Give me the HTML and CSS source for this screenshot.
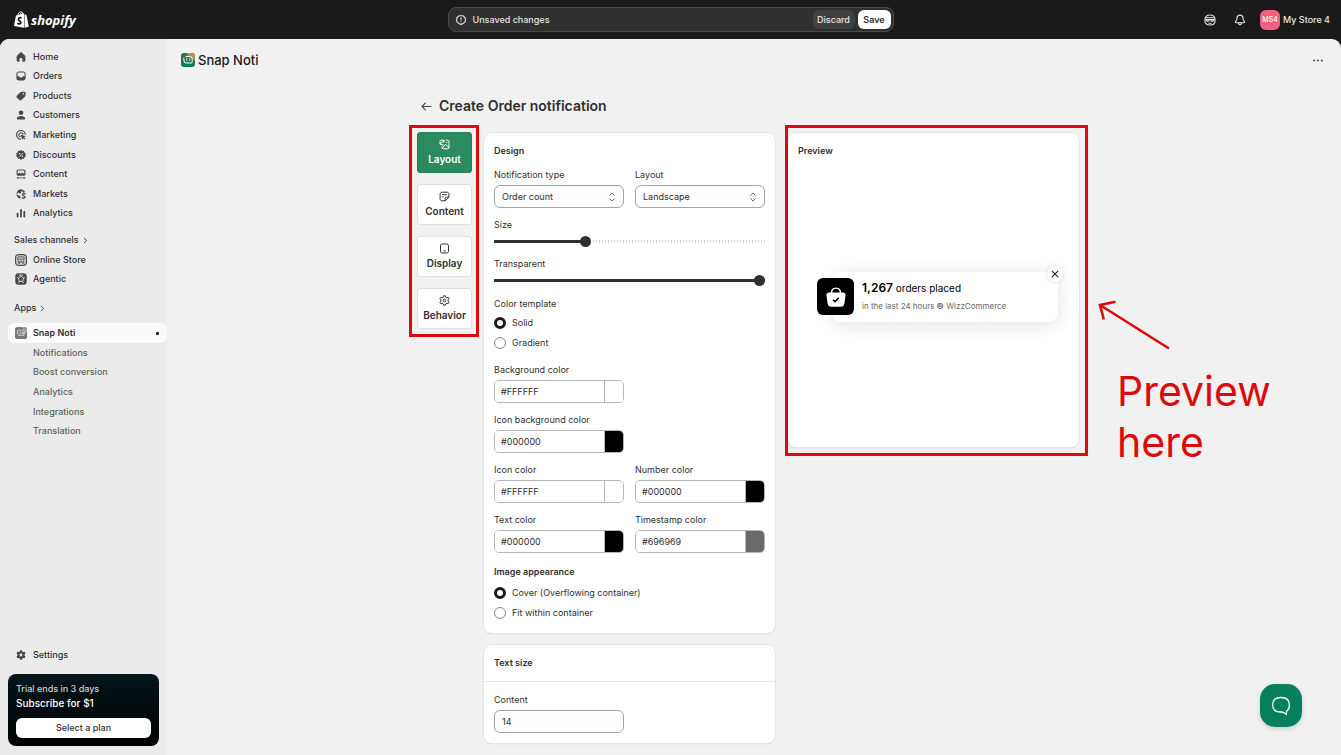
FILE: index.html
```html
<!DOCTYPE html>
<html lang="en">
<head>
    <title>Snap Noti</title>
    <meta charset="UTF-8">
    <meta name="viewport" content="width=device-width, initial-scale=1.0">
    <link rel="stylesheet" href="styles.css">
</head>
<body>
    <header class="topbar">
        <a class="brand" href="#">
            <svg width="15" height="17" viewBox="0 0 15 17">
                <path d="M2 4.5 10 2.6V16.8L0 15Z" fill="#fff"/>
                <path d="M10.5 2.8 12.6 4.6 14.8 15.7 10.5 16.8Z" fill="#fff"/>
                <path d="M3.8 4.6C4.2 2.2 5.5.7 6.9.8 8.3.9 8.9 2.4 8.9 3.6M6 4C6.5 1.7 7.8.8 9.2 2.6" fill="none" stroke="#fff" stroke-width="0.9"/>
                <path d="M7.7 7C6 6.2 4.3 7 4.4 8.4 4.5 10 7 9.9 6.9 11.6 6.8 13 5 13.3 3.4 12.3" fill="none" stroke="#1a1a1a" stroke-width="1.7"/>
            </svg>
            <span>shopify</span>
        </a>
        <div class="save-bar">
            <svg width="10" height="10" viewBox="0 0 10 10" fill="none" stroke="#e3e3e3" stroke-width="1.1">
                <path d="M3.2.7H6.8L9.3 3V6.6L7 8.7H6.2L5 9.6 3.8 8.7H3L.7 6.6V3Z" stroke-linejoin="round"/>
                <path d="M5 2.5V5.3M5 6.2V7.2"/>
            </svg>
            <span class="save-text">Unsaved changes</span>
            <button class="discard">Discard</button>
            <button class="save">Save</button>
        </div>
        <div class="account">
            <button class="icon-btn" aria-label="Assistant">
                <svg width="12" height="12" viewBox="0 0 12 12" fill="none" stroke="#e3e3e3" stroke-width="1.1">
                    <path d="M1 5.2C1 2.7 3 1 6 1S11 2.7 11 5.2V7.3C11 9.6 9 11 6 11S1 9.6 1 7.3Z"/>
                    <path d="M1.3 3.8H10.7M1.2 5.6H4.8M7.2 5.6H10.8M2.2 6.2C3 7.8 5 7.8 5.4 5.6H6.6C7 7.8 9 7.8 9.8 6.2M4.5 9.2H7.5"/>
                </svg>
            </button>
            <button class="icon-btn" aria-label="Notifications">
                <svg width="12" height="12" viewBox="0 0 12 12" fill="none" stroke="#e3e3e3" stroke-width="1.1" stroke-linejoin="round">
                    <path d="M6 1.1C4.1 1.1 3 2.5 3 4.2 3 6 2.5 6.7 1.5 7.7 1.2 8.1 1.4 8.7 2 8.7H10C10.6 8.7 10.8 8.1 10.5 7.7 9.5 6.7 9 6 9 4.2 9 2.5 7.9 1.1 6 1.1Z"/>
                    <path d="M4.6 8.9C4.6 11.2 7.4 11.2 7.4 8.9"/>
                </svg>
            </button>
            <button class="store"><span class="avatar">MS4</span>My Store 4</button>
        </div>
    </header>

    <div class="frame">
        <aside class="sidebar">
            <nav>
                <ul class="nav-list nav-main">
                    <li><a href="#"><svg viewBox="0 0 10 10"><path d="M5 .3C4.6.3 4.3.5 4 .8L1.2 3.4C.8 3.8.6 4.2.6 4.7V8.2C.6 9 1.2 9.7 2 9.7H3.6V7.3C3.6 6.5 4.2 6 5 6S6.4 6.5 6.4 7.3V9.7H8C8.8 9.7 9.4 9 9.4 8.2V4.7C9.4 4.2 9.2 3.8 8.8 3.4L6 .8C5.7.5 5.4.3 5 .3Z"/></svg>Home</a></li>
                    <li><a href="#"><svg viewBox="0 0 10 10"><path fill-rule="evenodd" d="M2.6.5H7.4C8.6.5 9.6 1.5 9.6 2.7V7.3C9.6 8.5 8.6 9.5 7.4 9.5H2.6C1.4 9.5.4 8.5.4 7.3V2.7C.4 1.5 1.4.5 2.6.5ZM2.6 1.6C2 1.6 1.5 2.1 1.5 2.7V5.3H3L4 6.6H6L7 5.3H8.5V2.7C8.5 2.1 8 1.6 7.4 1.6Z"/></svg>Orders</a></li>
                    <li><a href="#"><svg viewBox="0 0 10 10"><path fill-rule="evenodd" d="M6 .7H8.2C9 .7 9.5 1.2 9.5 2V4.1C9.5 4.8 9.2 5.3 8.8 5.7L5.4 9C4.8 9.6 3.9 9.6 3.3 9L.9 6.7C.3 6.1.3 5.2.9 4.6L4.3 1.3C4.8.9 5.3.7 6 .7ZM7.4 2.1A.7.7 0 1 0 7.4 3.5.7.7 0 0 0 7.4 2.1Z"/></svg>Products</a></li>
                    <li><a href="#"><svg viewBox="0 0 10 10"><circle cx="5" cy="2.7" r="2.3"/><path d="M5 6C2.7 6 .8 7.2.8 8.6.8 9.2 1.2 9.5 1.8 9.5H8.2C8.8 9.5 9.2 9.2 9.2 8.6 9.2 7.2 7.3 6 5 6Z"/></svg>Customers</a></li>
                    <li><a href="#"><svg viewBox="0 0 10 10"><path d="M9.4 4.8A4.4 4.4 0 1 0 4.8 9.3M7.2 4.5A2.2 2.2 0 1 0 4.5 7.1" fill="none" stroke="#4a4a4a" stroke-width="1.2"/><path d="M4.6 4.5 9.8 6.3 8 7.3 9.4 8.8 8.6 9.6 7.2 8.2 6.2 9.8Z"/></svg>Marketing</a></li>
                    <li><a href="#"><svg viewBox="0 0 10 10"><path fill-rule="evenodd" d="M5 0 6.3 1 7.9.8 8.4 2.4 9.8 3.2 9.3 4.8 9.9 6.3 8.5 7.2 8 8.8H6.4L5 9.9 3.7 8.8H2L1.5 7.2.1 6.3.7 4.8.2 3.2 1.6 2.4 2.1.8 3.7 1ZM3.5 2.9A.7.7 0 1 0 3.6 4.3.7.7 0 0 0 3.5 2.9ZM6.5 3 3 6.5 3.5 7 7 3.5ZM6.4 5.6A.7.7 0 1 0 6.5 7 .7.7 0 0 0 6.4 5.6Z"/></svg>Discounts</a></li>
                    <li><a href="#"><svg viewBox="0 0 10 10"><path fill-rule="evenodd" d="M2.4.4H7.6C8.7.4 9.5 1.2 9.5 2.2V5C9.5 6 8.7 6.8 7.6 6.8H2.4C1.3 6.8.5 6 .5 5V2.2C.5 1.2 1.3.4 2.4.4ZM1.7 5.1 3.5 3.4 5 4.8 6.5 3.4 8.3 5.1V2.3C8.3 1.9 8 1.5 7.6 1.5H2.4C2 1.5 1.7 1.9 1.7 2.3Z"/><path d="M.7 8.3H3.5V9.4H.7ZM4.4 8.3H5.7V9.4H4.4ZM6.6 8.3H9.3V9.4H6.6Z"/></svg>Content</a></li>
                    <li><a href="#"><svg viewBox="0 0 10 10"><path d="M4.6.3A4.7 4.7 0 0 0 4.6 9.6L4.5 7.7 3.1 6.3 1.2 5.9 1.3 4.2 3 3.4 3.6 4.8 5.3 4 5 2.8 6.9 1.9 6.6.7Z"/><path d="M7.2.9 9.2 3.1 7.6 3.8 6.3 3.1Z"/><path d="M9.5 5.2C8.6 4.2 6.3 4.5 6.5 5.9 6.7 7.1 9 6.5 9 8 9 9.2 7 9.6 5.9 8.5" fill="none" stroke="#4a4a4a" stroke-width="1.3"/></svg>Markets</a></li>
                    <li><a href="#"><svg viewBox="0 0 10 10"><rect x=".7" y="4.8" width="1.8" height="4.7" rx=".8"/><rect x="4.1" y=".9" width="1.8" height="8.6" rx=".8"/><rect x="7.4" y="2.9" width="1.8" height="6.6" rx=".8"/></svg>Analytics</a></li>
                </ul>
                <a class="nav-heading" href="#">Sales channels <svg width="5" height="7" viewBox="0 0 5 7"><path d="M1 .9 3.6 3.5 1 6.1"/></svg></a>
                <ul class="nav-list nav-channels">
                    <li><a href="#"><svg viewBox="0 0 12 12"><rect x=".6" y=".6" width="10.8" height="10.8" rx="2.8" fill="#d4d4d4" stroke="#4a4a4a" stroke-width="1.2"/><path d="M3.2 2.9H8.8L9.4 5.2H2.6ZM3.3 6.3V9.2H4.9V7.4H7.1V9.2H8.7V6.3" fill="none" stroke="#4a4a4a" stroke-width=".9"/></svg>Online Store</a></li>
                    <li><a href="#"><svg viewBox="0 0 12 12"><rect x=".3" y=".3" width="11.4" height="11.4" rx="3" fill="#4a4a4a"/><path d="M6 3.2 8.6 5 7.7 8.4H4.3L3.4 5Z" fill="none" stroke="#e0e0e0" stroke-width=".9"/><path d="M2.2 4.4 3.4 5M9.8 4.4 8.6 5M3.4 9.9 4.3 8.4M8.6 9.9 7.7 8.4M3.9 2.1H8.1" stroke="#e0e0e0" stroke-width=".9"/></svg>Agentic</a></li>
                </ul>
                <a class="nav-heading" href="#">Apps <svg width="5" height="7" viewBox="0 0 5 7"><path d="M1 .9 3.6 3.5 1 6.1"/></svg></a>
                <a class="nav-app" href="#">
                    <svg viewBox="0 0 12 12"><rect width="12" height="12" rx="2.6" fill="#777"/><path d="M6 0H9.4A2.6 2.6 0 0 1 12 2.6V6Z" fill="#9b9b9b"/><path d="M5.6 3.2C3.5 2 1.8 4 2.5 5.7 2 7.8 4.7 9 6.6 8.2M5.2 4.3V6.8M6.6 3.4C9 2.3 10.7 4.4 9.5 6.2 10.2 8 8.3 8.8 6.8 8.1M6.7 5H8.3V6.7H6.7" fill="none" stroke="#ececec" stroke-width=".9"/></svg>
                    Snap Noti
                    <span class="pin"></span>
                </a>
                <ul class="nav-list nav-sub">
                    <li><a href="#">Notifications</a></li>
                    <li><a href="#">Boost conversion</a></li>
                    <li><a href="#">Analytics</a></li>
                    <li><a href="#">Integrations</a></li>
                    <li><a href="#">Translation</a></li>
                </ul>
            </nav>
            <div class="sidebar-bottom">
                <a class="nav-settings" href="#"><svg viewBox="0 0 10 10"><path fill-rule="evenodd" d="M4.1.3H5.9L6.3 1.6 7.3 2.1 8.6 1.8 9.5 3.3 8.6 4.4V5.6L9.5 6.7 8.6 8.2 7.3 7.9 6.3 8.4 5.9 9.7H4.1L3.7 8.4 2.7 7.9 1.4 8.2.5 6.7 1.4 5.6V4.4L.5 3.3 1.4 1.8 2.7 2.1 3.7 1.6ZM5 3.6A1.4 1.4 0 1 0 5 6.4 1.4 1.4 0 0 0 5 3.6Z"/></svg>Settings</a>
                <div class="trial">
                    <p>Trial ends in 3 days</p>
                    <p class="subscribe">Subscribe for $1</p>
                    <button>Select a plan</button>
                </div>
            </div>
        </aside>

        <main class="main">
            <div class="app-header">
                <svg width="14" height="14" viewBox="0 0 14 14"><rect width="14" height="14" rx="3" fill="#147a5c"/><path d="M5 0H11A3 3 0 0 1 14 3V8Z" fill="#b98b58"/><path d="M6.6 3.6C4.2 2.6 2 4.9 3 6.9 2.4 9.4 5 10.6 7.3 9.8 9.6 10.8 12 9.6 11.2 7.2 12 4.8 9.6 2.8 6.6 3.6Z" fill="none" stroke="#e8f4ef" stroke-width="1.1"/><path d="M5.9 5.2C5.2 6.2 5.4 7.4 6.4 8M8 5.4C9.4 5.4 9.6 7.2 8.2 7.8" fill="none" stroke="#e8f4ef" stroke-width=".9"/><circle cx="3.9" cy="4.2" r="1.2" fill="#d43b35"/></svg>
                <span class="app-name">Snap Noti</span>
                <button class="more" aria-label="More actions"><svg width="10" height="3" viewBox="0 0 10 3" fill="#4a4a4a"><circle cx="1.2" cy="1.5" r="1"/><circle cx="5" cy="1.5" r="1"/><circle cx="8.8" cy="1.5" r="1"/></svg></button>
            </div>

            <div class="page">
                <div class="page-title">
                    <a href="#" aria-label="Back"><svg width="11" height="9" viewBox="0 0 11 9" fill="none" stroke="#4a4a4a" stroke-width="1.2" stroke-linecap="round" stroke-linejoin="round"><path d="M10 4.5H1.2M4.3 1.2 1 4.5 4.3 7.8"/></svg></a>
                    <h1>Create Order notification</h1>
                </div>

                <div class="columns">
                    <div class="tabs">
                        <button class="tab active">
                            <svg viewBox="0 0 11 11"><path d="M5 1.2H2.2C1.5 1.2 1 1.7 1 2.4V4.6C1 5.2 1.5 5.7 2.2 5.7H4.6M1.2 4.7 5 2M5 1.2V3.6M6.8 1.2H8.8C9.5 1.2 10 1.7 10 2.4V8.6C10 9.3 9.5 9.8 8.8 9.8H4.2C3.5 9.8 3 9.3 3 8.6V7.4M3.3 9 6.7 5.3 9.8 8.7M7.2 3.5H8.4"/></svg>
                            Layout
                        </button>
                        <button class="tab">
                            <svg viewBox="0 0 11 11"><path d="M6.2 9.8H3C1.9 9.8 1.1 9 1.1 7.9V3.1C1.1 2 1.9 1.2 3 1.2H8C9.1 1.2 9.9 2 9.9 3.1V6.2L6.2 9.8V7.6C6.2 6.8 6.7 6.2 7.6 6.2H9.8M3.2 3.7H7.8M3.2 5.8H4.6"/></svg>
                            Content
                        </button>
                        <button class="tab">
                            <svg viewBox="0 0 11 11"><rect x="1.5" y="1" width="8" height="9" rx="1.8"/><path d="M4.3 7.9H6.7"/></svg>
                            Display
                        </button>
                        <button class="tab">
                            <svg viewBox="0 0 11 11"><path d="M4.6.8H6.4L6.8 2.2 7.8 2.7 9.2 2.3 10.1 3.8 9.1 4.8V6.2L10.1 7.2 9.2 8.7 7.8 8.3 6.8 8.8 6.4 10.2H4.6L4.2 8.8 3.2 8.3 1.8 8.7.9 7.2 1.9 6.2V4.8L.9 3.8 1.8 2.3 3.2 2.7 4.2 2.2Z"/><circle cx="5.5" cy="5.5" r="1.4"/></svg>
                            Behavior
                        </button>
                        <div class="highlight highlight-tabs"></div>
                    </div>

                    <div class="settings">
                        <form class="forms">
                            <section class="card design">
                                <h2>Design</h2>
                                <div class="row">
                                    <div class="field">
                                        <label for="type">Notification type</label>
                                        <div class="select">
                                            <select id="type"><option>Order count</option></select>
                                            <svg width="8" height="10" viewBox="0 0 8 10"><path d="M1.5 3.5 4 1 6.5 3.5M1.5 6.5 4 9 6.5 6.5"/></svg>
                                        </div>
                                    </div>
                                    <div class="field">
                                        <label for="layout">Layout</label>
                                        <div class="select">
                                            <select id="layout"><option>Landscape</option></select>
                                            <svg width="8" height="10" viewBox="0 0 8 10"><path d="M1.5 3.5 4 1 6.5 3.5M1.5 6.5 4 9 6.5 6.5"/></svg>
                                        </div>
                                    </div>
                                </div>
                                <div class="range-field">
                                    <label for="size">Size</label>
                                    <input type="range" id="size" min="0" max="100" value="33" style="--value: 33%">
                                </div>
                                <div class="range-field">
                                    <label for="transparent">Transparent</label>
                                    <input type="range" id="transparent" min="0" max="100" value="100" style="--value: 100%">
                                </div>
                                <fieldset class="choices template">
                                    <legend>Color template</legend>
                                    <label><input type="radio" name="template" checked>Solid</label>
                                    <label><input type="radio" name="template">Gradient</label>
                                </fieldset>
                                <div class="row">
                                    <div class="field">
                                        <label for="bg">Background color</label>
                                        <div class="color"><input type="text" id="bg" value="#FFFFFF"><input type="color" value="#ffffff" aria-label="Pick background color"></div>
                                    </div>
                                </div>
                                <div class="row">
                                    <div class="field">
                                        <label for="icon-bg">Icon background color</label>
                                        <div class="color"><input type="text" id="icon-bg" value="#000000"><input type="color" value="#000000" aria-label="Pick icon background color"></div>
                                    </div>
                                </div>
                                <div class="row">
                                    <div class="field">
                                        <label for="icon-color">Icon color</label>
                                        <div class="color"><input type="text" id="icon-color" value="#FFFFFF"><input type="color" value="#ffffff" aria-label="Pick icon color"></div>
                                    </div>
                                    <div class="field">
                                        <label for="number-color">Number color</label>
                                        <div class="color"><input type="text" id="number-color" value="#000000"><input type="color" value="#000000" aria-label="Pick number color"></div>
                                    </div>
                                </div>
                                <div class="row">
                                    <div class="field">
                                        <label for="text-color">Text color</label>
                                        <div class="color"><input type="text" id="text-color" value="#000000"><input type="color" value="#000000" aria-label="Pick text color"></div>
                                    </div>
                                    <div class="field">
                                        <label for="time-color">Timestamp color</label>
                                        <div class="color"><input type="text" id="time-color" value="#696969"><input type="color" value="#696969" aria-label="Pick timestamp color"></div>
                                    </div>
                                </div>
                                <fieldset class="choices appearance">
                                    <legend>Image appearance</legend>
                                    <label><input type="radio" name="image" checked>Cover (Overflowing container)</label>
                                    <label><input type="radio" name="image">Fit within container</label>
                                </fieldset>
                            </section>

                            <section class="card text-size">
                                <h2>Text size</h2>
                                <div class="card-body row">
                                    <div class="field">
                                        <label for="content-size">Content</label>
                                        <input class="number" type="text" inputmode="numeric" id="content-size" value="14">
                                    </div>
                                </div>
                            </section>
                        </form>

                        <div class="preview-column">
                            <section class="card preview">
                                <h2>Preview</h2>
                                <div class="preview-body">
                                    <div class="notification">
                                        <div class="bag">
                                            <svg width="20" height="20" viewBox="0 0 20 20">
                                                <path d="M5.4 6.5C5.4 3 7.3 1.1 10 1.1S14.6 3 14.6 6.5" fill="none" stroke="#fff" stroke-width="1.4"/>
                                                <path d="M3.3 5.6H16.7C18.7 5.6 19.8 7 19.5 8.8L18.4 16.6C18 18.8 16.8 19.8 14.8 19.8H5.2C3.2 19.8 2 18.8 1.6 16.6L.5 8.8C.2 7 1.3 5.6 3.3 5.6Z" fill="#fff"/>
                                                <path d="M7 12.7 9 14.6 12.8 10.8" fill="none" stroke="#000" stroke-width="1.5"/>
                                            </svg>
                                        </div>
                                        <div class="message">
                                            <p><strong>1,267</strong> orders placed</p>
                                            <p class="time">in the last 24 hours <b>©</b> WizzCommerce</p>
                                        </div>
                                        <button class="close" aria-label="Close"><svg width="8" height="8" viewBox="0 0 8 8"><path d="M.8.8 7.2 7.2M7.2.8.8 7.2" stroke="#222" stroke-width="1.1"/></svg></button>
                                    </div>
                                </div>
                            </section>
                            <div class="highlight highlight-preview"></div>
                            <div class="note">
                                <svg width="72" height="50" viewBox="0 0 72 50" fill="none" stroke="#dc0a0a" stroke-width="2.6"><path d="M71 48.5 2 5M17.5 1.8 2 5 5.8 19.5"/></svg>
                                <p>Preview<br>here</p>
                            </div>
                        </div>
                    </div>
                </div>
            </div>
        </main>
    </div>

    <button class="chat" aria-label="Open chat">
        <svg width="20" height="20" viewBox="0 0 20 20" fill="none" stroke="#fff" stroke-width="1.3" stroke-linejoin="round"><path d="M10 1.5C4.5 1.5 1.6 3.7 1.6 9S4.5 16 10 16C11.5 16 12.5 16.3 13.4 17L15.3 18.5 15.7 15C17.6 13.8 18.4 11.9 18.4 9 18.4 3.7 15.5 1.5 10 1.5Z"/></svg>
    </button>
</body>
</html>
```
FILE: styles.css
```css
* {
    box-sizing: border-box;
}
body {
    margin: 0;
    height: 100vh;
    display: flex;
    flex-direction: column;
    overflow: hidden;
    background: #1a1a1a;
    color: #303030;
    font-family: Inter, "Liberation Sans", sans-serif;
    font-size: 9px;
    line-height: 14px;
}
button, input, select {
    font: inherit;
    color: inherit;
}
button {
    border: none;
    padding: 0;
    cursor: pointer;
}
a {
    color: inherit;
    text-decoration: none;
}
ul {
    list-style: none;
    margin: 0;
    padding: 0;
}
h1, h2, p {
    margin: 0;
}
svg {
    display: block;
    flex: none;
}

/* top bar */
.topbar {
    display: grid;
    grid-template-columns: 1fr minmax(0, 446px) 1fr;
    align-items: center;
    height: 39px;
    padding: 0 11px;
    color: #e3e3e3;
    font-weight: 500;
}
.brand {
    display: flex;
    align-items: center;
    gap: 2px;
    padding-left: 3px;
    color: #fff;
    font: italic 700 13px "Open Sans", sans-serif;
}
.save-bar {
    display: flex;
    align-items: center;
    height: 25px;
    padding: 0 2px 0 7px;
    border: 1px solid #4a4a4a;
    border-radius: 8px;
    background: #303030;
}
.save-text {
    flex: 1;
    margin-left: 7px;
}
.discard, .save {
    height: 19px;
    border-radius: 6px;
}
.discard {
    width: 42px;
    margin-right: 3px;
    background: #404040;
}
.save {
    width: 33px;
    background: #fff;
    color: #303030;
    font-weight: 600;
}
.account {
    display: flex;
    justify-content: flex-end;
    align-items: center;
}
.icon-btn {
    margin-right: 18px;
    background: none;
}
.icon-btn + .icon-btn {
    margin-right: 14px;
}
.store {
    display: flex;
    align-items: center;
    gap: 3px;
    background: none;
}
.avatar {
    width: 20px;
    border-radius: 6px;
    background: #f2607f;
    color: #fff;
    font-size: 7px;
    line-height: 20px;
    text-align: center;
}

/* sidebar */
.frame {
    flex: 1;
    min-height: 0;
    display: flex;
    border-radius: 9px 9px 0 0;
    overflow: hidden;
    background: #f1f1f1;
}
.sidebar {
    width: 167px;
    flex: none;
    display: flex;
    flex-direction: column;
    justify-content: space-between;
    padding: 8px 0 9px;
    background: #ebebeb;
    font-weight: 500;
}
.nav-list {
    display: grid;
    grid-auto-rows: 1fr;
}
.nav-list a, .nav-app, .nav-settings {
    display: flex;
    align-items: center;
    height: 100%;
    padding-left: 16px;
}
.sidebar svg {
    fill: #4a4a4a;
}
.nav-list svg, .nav-settings svg {
    width: 10px;
    height: 10px;
    margin-right: 7px;
}
.nav-main {
    min-height: 176px;
}
.nav-heading {
    display: flex;
    align-items: center;
    gap: 4px;
    margin-top: 7px;
    padding-left: 14px;
    line-height: 20px;
}
.nav-heading svg {
    fill: none;
    stroke: #4a4a4a;
}
.nav-channels {
    min-height: 39px;
    margin-bottom: 9px;
}
.nav-list.nav-channels a {
    padding-left: 15px;
}
.nav-list.nav-channels svg, .nav-app svg {
    width: 12px;
    height: 12px;
    margin-right: 6px;
}
.nav-app {
    height: 20px;
    margin: 5px 0 0 8px;
    padding: 0 8px 0 7px;
    border-radius: 6px;
    background: #fafafa;
    font-weight: 600;
}
.pin {
    width: 3px;
    height: 3px;
    margin-left: auto;
    border-radius: 1px;
    background: #1a1a1a;
}
.nav-sub {
    min-height: 98px;
    color: #616161;
}
.nav-list.nav-sub a {
    padding-left: 33px;
}
.nav-settings {
    height: 20px;
    margin-bottom: 9px;
}
.trial {
    margin: 0 8px;
    padding: 8px;
    border-radius: 8px;
    background: linear-gradient(#04161a, #000);
    color: #d0d0d0;
}
.trial .subscribe {
    color: #fff;
    font-size: 10px;
    font-weight: 500;
}
.trial button {
    width: 100%;
    height: 20px;
    margin-top: 8px;
    border-radius: 6px;
    background: #fff;
    color: #303030;
}

/* main area */
.main {
    flex: 1;
    min-width: 0;
}
.app-header {
    display: flex;
    align-items: center;
    gap: 3px;
    height: 40px;
    padding: 3px 18px 0 14px;
    border-bottom: 1px solid #ececec;
}
.app-name {
    flex: 1;
    font-size: 13px;
    font-weight: 500;
    color: #1a1a1a;
}
.more {
    background: none;
}
.page {
    max-width: 674px;
    margin: 0 auto;
    padding: 17px 12px 12px 0;
}
.page-title {
    display: flex;
    align-items: center;
    gap: 7px;
    padding-left: 4px;
}
.page-title h1 {
    font-size: 14px;
    line-height: 20px;
    font-weight: 600;
}
.columns {
    display: flex;
    gap: 12px;
    margin-top: 16px;
}
.tabs {
    position: relative;
    display: flex;
    flex-direction: column;
    gap: 11px;
    align-self: flex-start;
    width: 55px;
}
.tab {
    display: flex;
    flex-direction: column;
    align-items: center;
    gap: 2px;
    height: 41px;
    padding-top: 6px;
    border: 1px solid #e0e0e0;
    border-radius: 3px;
    background: #fff;
    font-size: 10px;
    font-weight: 600;
}
.tab.active {
    border-color: #2c7d58;
    background: #2c8a60;
    color: #fff;
}
.tab svg {
    width: 11px;
    height: 11px;
    fill: none;
    stroke: currentColor;
}
.settings {
    flex: 1;
    display: grid;
    grid-template-columns: 1fr 1fr;
    gap: 13px;
    align-items: start;
    margin-top: 1px;
}
.forms {
    display: flex;
    flex-direction: column;
    gap: 12px;
}
.card {
    border-radius: 8px;
    background: #fff;
    box-shadow: 0 0 0 1px #e5e5e5, 0 1px 1px #c4c4c4;
}
.card h2 {
    font-size: 9px;
    line-height: 15px;
    font-weight: 600;
}
.design {
    display: flex;
    flex-direction: column;
    gap: 10px;
    padding: 10px;
}
.row {
    display: grid;
    grid-template-columns: 1fr 1fr;
    gap: 11px;
}
.field {
    display: flex;
    flex-direction: column;
    gap: 3px;
    min-width: 0;
}
.select {
    position: relative;
}
.select select, .number {
    display: block;
    width: 100%;
    height: 23px;
    padding: 0 7px;
    border: 1px solid #a3a3a3;
    border-radius: 6px;
    background: #fdfdfd;
    appearance: none;
}
.select svg {
    position: absolute;
    top: 7px;
    right: 8px;
    fill: none;
    stroke: #6a6a6a;
    pointer-events: none;
}
.range-field {
    display: flex;
    flex-direction: column;
}
.range-field + .range-field {
    margin-top: -3px;
}
.range-field input {
    width: 100%;
    height: 18px;
    margin: 0;
    appearance: none;
    background:
        linear-gradient(#303030, #303030) left / var(--value) 3px no-repeat,
        repeating-linear-gradient(90deg, #d8d8d8 0 1px, transparent 1px 3px) center / 100% 3px no-repeat;
}
.range-field input::-webkit-slider-thumb {
    appearance: none;
    width: 11px;
    height: 11px;
    border-radius: 50%;
    background: #303030;
}
.choices {
    display: flex;
    flex-direction: column;
    margin: 0;
    padding: 0;
    border: none;
}
.choices legend {
    padding: 0 0 2px;
}
.choices label {
    display: flex;
    align-items: center;
    gap: 6px;
    height: 20px;
}
.choices input {
    width: 12px;
    height: 12px;
    margin: 0;
    border: 1px solid #8a8a8a;
    border-radius: 50%;
    background: #fff;
    appearance: none;
}
.choices input:checked {
    border: 3px solid #1a1a1a;
}
.template {
    margin-top: -2px;
}
.appearance {
    margin-top: 2px;
}
.appearance legend {
    padding-bottom: 4px;
    font-weight: 600;
}
.color {
    display: flex;
    height: 23px;
    border: 1px solid #b5b5b5;
    border-radius: 5px;
    overflow: hidden;
}
.color input {
    border: none;
    padding: 0;
}
.color input[type="text"] {
    flex: 1;
    min-width: 0;
    padding-left: 6px;
}
.color input[type="color"] {
    width: 19px;
    height: 100%;
    border-left: 1px solid #b5b5b5;
    background: none;
    appearance: none;
}
.color input::-webkit-color-swatch-wrapper {
    padding: 0;
}
.color input::-webkit-color-swatch {
    border: none;
    border-radius: 0;
}
.text-size h2 {
    padding: 10px 10px 11px;
    border-bottom: 1px solid #e8e8e8;
}
.card-body {
    padding: 11px 10px 10px;
}

/* preview */
.preview-column {
    position: relative;
}
.preview {
    display: flex;
    flex-direction: column;
    min-height: 314px;
    padding: 10px;
}
.preview-body {
    flex: 1;
    display: flex;
    align-items: center;
    justify-content: center;
}
.notification {
    position: relative;
    display: flex;
    align-items: center;
    width: 226px;
    height: 50px;
    margin: 0 0 2px 23px;
    border-radius: 9px;
    background: #fff;
    box-shadow: 0 3px 18px rgba(0, 0, 0, 0.12);
}
.bag {
    display: flex;
    align-items: center;
    justify-content: center;
    width: 37px;
    height: 37px;
    margin: 0 8px 0 -15px;
    border-radius: 6px;
    background: #000;
}
.message {
    color: #000;
    font-size: 10px;
}
.message strong {
    font-size: 12px;
    font-weight: 600;
}
.time {
    margin-top: 4px;
    color: #696969;
    font-size: 8px;
}
.close {
    position: absolute;
    top: -6px;
    right: -5px;
    display: flex;
    align-items: center;
    justify-content: center;
    width: 16px;
    height: 16px;
    border-radius: 50%;
    background: #fff;
    box-shadow: 0 0 4px rgba(0, 0, 0, 0.15);
}

/* red callouts drawn over the page */
.highlight {
    position: absolute;
    border: 3px solid #dc0a0a;
    pointer-events: none;
}
.highlight-tabs {
    inset: -7px -7px -8px -8px;
}
.highlight-preview {
    inset: -8px -9px -9px -3px;
}
.note {
    position: absolute;
    top: 167px;
    left: calc(100% + 19px);
    color: #dc0a0a;
}
.note p {
    margin: 16px 0 0 19px;
    font-size: 41px;
    line-height: 51px;
}

.chat {
    position: fixed;
    right: 39px;
    bottom: 28px;
    display: flex;
    align-items: center;
    justify-content: center;
    width: 42px;
    height: 43px;
    border-radius: 15px;
    background: #06805c;
    box-shadow: 0 2px 5px rgba(0, 0, 0, 0.15);
}
```
